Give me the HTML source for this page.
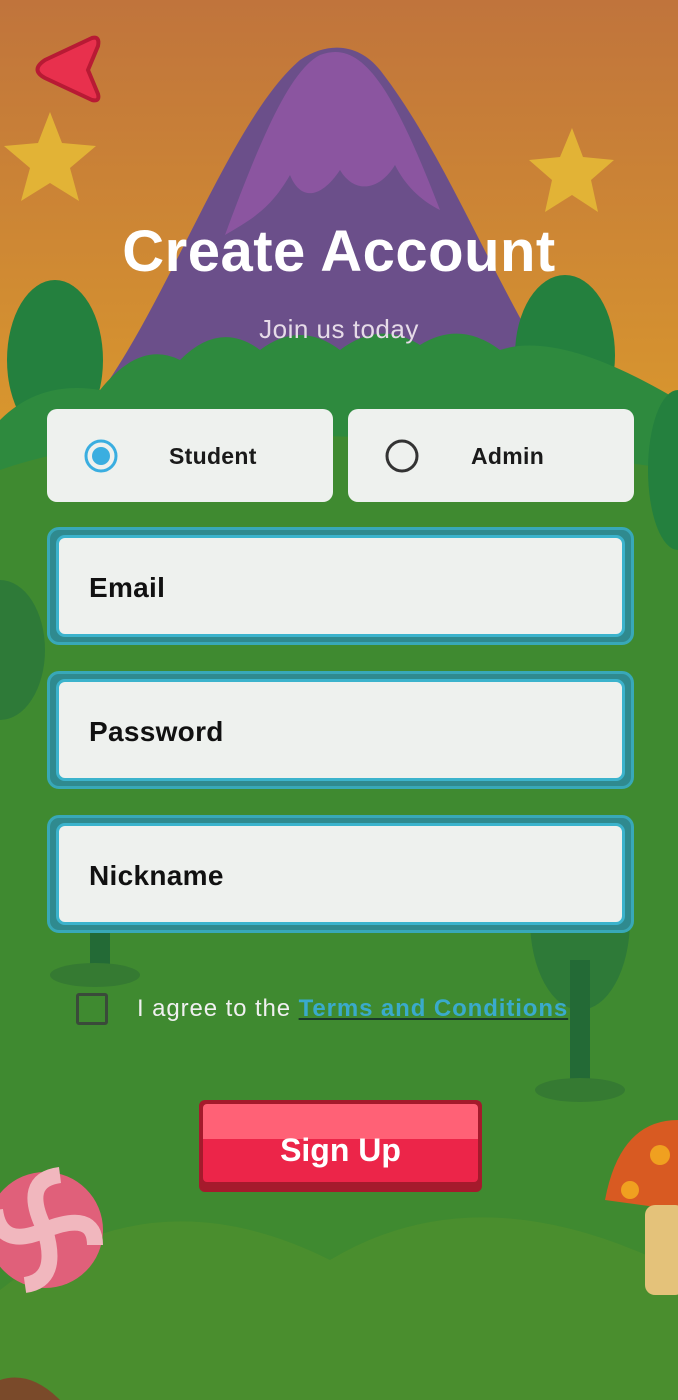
<!DOCTYPE html>
<html><head><meta charset="utf-8"><style>
*{margin:0;padding:0;box-sizing:border-box}
body{width:678px;height:1400px;overflow:hidden;font-family:"Liberation Sans",sans-serif;position:relative;background:#3f8a30}
svg.bg{position:absolute;left:0;top:0}
.abs{position:absolute}
.title{left:0;width:678px;top:218px;text-align:center;color:#fff;font-size:58px;font-weight:bold;letter-spacing:0.5px}
.sub{left:0;width:678px;top:314px;text-align:center;color:#e6dbe8;font-size:26px;letter-spacing:0.5px}
.role{top:409px;height:93px;background:#eef1ee;border-radius:10px}
.role span{position:absolute;top:34px;font-size:23px;font-weight:bold;color:#1a1a1a;letter-spacing:0.3px}
.inp{left:47px;width:587px;height:118px;border:3px solid #38a8b8;border-radius:12px;background:#2f8a8f}
.inp div{position:absolute;left:6px;top:5px;right:6px;bottom:5px;background:#eef1ee;border:3px solid #3bb3cc;border-radius:9px;font-size:28px;font-weight:bold;color:#111;padding:34px 0 0 30px;letter-spacing:0.3px}
</style></head><body>
<svg class="bg" width="678" height="1400" viewBox="0 0 678 1400">
<defs><linearGradient id="sky" x1="0" y1="0" x2="0" y2="1"><stop offset="0" stop-color="#c0743c"/><stop offset="1" stop-color="#d8962e"/></linearGradient></defs>
<rect width="678" height="420" fill="url(#sky)"/>
<path d="M95 400 C170 300 230 120 300 60 C330 40 360 45 380 70 C450 160 500 300 570 400Z" fill="#6b4f8a"/>
<path d="M225 235 C260 140 290 70 320 55 C360 40 390 80 440 210 C420 200 405 185 395 165 C380 190 355 195 340 170 C320 200 300 200 290 175 C270 210 250 220 225 235Z" fill="#8b55a0"/>
<path d="M50 112 L62 143 L96 146 L70 168 L79 201 L50 183 L21 201 L30 168 L4 146 L38 143 Z" fill="#e2b336"/>
<path d="M572 128 L583 157 L614 160 L591 180 L598 212 L572 195 L545 212 L552 180 L529 160 L560 157 Z" fill="#e2b336"/>
<path d="M45 60 L92 38 Q100 36 98 46 L88 70 L98 94 Q100 102 92 100 L45 78 Q30 70 45 60Z" fill="#e8304d" stroke="#b81a34" stroke-width="4"/>
<ellipse cx="55" cy="360" rx="48" ry="80" fill="#24803e"/>
<ellipse cx="565" cy="355" rx="50" ry="80" fill="#24803e"/>
<path d="M0 420 Q40 380 100 390 Q140 340 180 360 Q220 320 260 350 Q300 320 340 350 Q380 320 420 345 Q460 320 500 350 Q560 330 678 400 L678 1400 L0 1400Z" fill="#2e8a3e"/>
<path d="M0 470 Q200 400 678 470 L678 1400 L0 1400Z" fill="#3f8a30"/>
<ellipse cx="678" cy="470" rx="30" ry="80" fill="#24803e"/>
<ellipse cx="0" cy="650" rx="45" ry="70" fill="#2e7a38"/>
<ellipse cx="580" cy="920" rx="50" ry="90" fill="#2e7a38"/>
<rect x="570" y="960" width="20" height="130" fill="#236a36"/>
<ellipse cx="580" cy="1090" rx="45" ry="12" fill="#357a32"/>
<rect x="90" y="930" width="20" height="50" fill="#236a36"/>
<ellipse cx="95" cy="975" rx="45" ry="12" fill="#357a32"/>
<path d="M0 1290 Q150 1170 330 1260 Q480 1170 678 1270 L678 1400 L0 1400Z" fill="#4a8e2e"/>
<circle cx="45" cy="1230" r="58" fill="#e0607a"/>
<path d="M45 1230 Q20 1180 60 1175 M45 1230 Q95 1210 95 1245 M45 1230 Q60 1280 25 1285 M45 1230 Q0 1250 -5 1210" stroke="#f1b7be" stroke-width="16" fill="none"/>
<path d="M605 1200 Q620 1120 678 1120 L678 1210 Z" fill="#d85a22"/>
<rect x="645" y="1205" width="40" height="90" rx="10" fill="#e4c27a"/>
<circle cx="660" cy="1155" r="10" fill="#f0a020"/><circle cx="630" cy="1190" r="9" fill="#f0a020"/>
<path d="M0 1380 Q30 1370 60 1400 L0 1400Z" fill="#7a4a2a"/>
</svg>
<div class="abs title">Create Account</div>
<div class="abs sub">Join us today</div>
<div class="abs role" style="left:47px;width:286px">
<svg class="abs" style="left:36px;top:29px" width="36" height="36"><circle cx="18" cy="18" r="15" fill="none" stroke="#3aaee0" stroke-width="3"/><circle cx="18" cy="18" r="9" fill="#3aaee0"/></svg>
<span style="left:122px">Student</span></div>
<div class="abs role" style="left:348px;width:286px">
<svg class="abs" style="left:36px;top:29px" width="36" height="36"><circle cx="18" cy="18" r="15" fill="none" stroke="#333" stroke-width="3"/></svg>
<span style="left:123px">Admin</span></div>
<div class="abs inp" style="top:527px"><div>Email</div></div>
<div class="abs inp" style="top:671px"><div>Password</div></div>
<div class="abs inp" style="top:815px"><div>Nickname</div></div>
<div class="abs" style="left:76px;top:993px;width:32px;height:32px;border:3px solid #3a4a3a;border-radius:3px"></div>
<div class="abs" style="left:137px;top:995px;font-size:24px;color:#f0f0f0;letter-spacing:0.9px;white-space:nowrap">I agree to the <span style="color:#3aaacc;font-weight:bold;text-decoration:underline;text-decoration-color:#1a3a2a">Terms and Conditions</span></div>
<div class="abs" style="left:199px;top:1100px;width:283px;height:92px;border-radius:6px;background:#a51a2c;border:2px solid #a51a2c">
<div style="position:absolute;left:2px;top:2px;right:2px;bottom:8px;border-radius:4px;background:linear-gradient(#ff6176 0,#ff6176 45%,#ec2549 45%);"></div>
<div style="position:absolute;left:0;right:0;top:30px;text-align:center;color:#fff;font-size:32px;font-weight:bold">Sign Up</div></div>
</body></html>
